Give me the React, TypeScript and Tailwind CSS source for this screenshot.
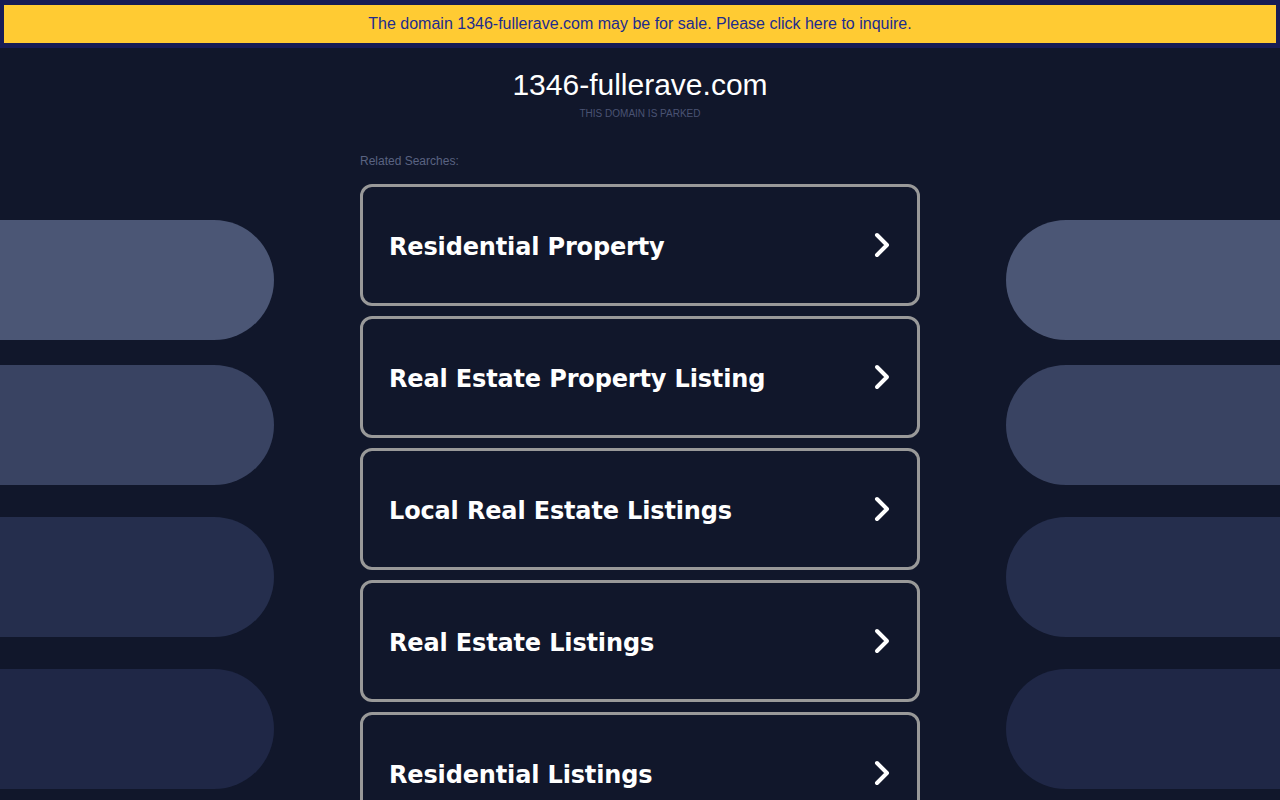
import React from "react";

const searches = [
  "Residential Property",
  "Real Estate Property Listing",
  "Local Real Estate Listings",
  "Real Estate Listings",
  "Residential Listings",
];

const pills = [
  { color: "bg-[#4b5675]", gap: "mt-[172px]" },
  { color: "bg-[#394362]", gap: "mt-[25px]" },
  { color: "bg-[#252e4d]", gap: "mt-[32px]" },
  { color: "bg-[#1f2746]", gap: "mt-[32px]" },
];

function Chevron() {
  return (
    <svg width="20" height="28" viewBox="0 0 20 28" fill="none" aria-hidden="true">
      <polyline points="5,4 15,14 5,24" stroke="#ffffff" strokeWidth="4" strokeLinecap="round" strokeLinejoin="round" />
    </svg>
  );
}

function SearchCard({ label }: { label: string }) {
  return (
    <a
      href="#"
      className="flex h-[122px] items-center justify-between rounded-[12px] border-[3px] border-[#999999] pl-[26px] pr-[25px] text-white"
    >
      <span className="pt-[4px] font-['DejaVu_Sans',sans-serif] text-[24px] font-bold tracking-[-0.15px]">{label}</span>
      <Chevron />
    </a>
  );
}

export default function App() {
  return (
    <div className="min-h-screen overflow-hidden bg-[#11172b] font-['Liberation_Sans',Arial,sans-serif]">
      <div className="border-x-4 border-y-[5px] border-[#171c55] bg-[#ffcb33]">
        <p className="flex h-[38px] items-center justify-center text-[16px] text-[#1d2c8e]">
          The domain 1346-fullerave.com may be for sale. Please click here to inquire.
        </p>
      </div>

      <div className="grid grid-cols-[360px_560px_360px]">
        <div className="flex flex-col items-end pr-[86px]">
          {pills.map((p) => (
            <div key={p.color} className={`${p.gap} h-[120px] w-[320px] rounded-r-full ${p.color}`} />
          ))}
        </div>

        <div className="flex flex-col">
          <h1 className="mt-[20px] text-center text-[30px] leading-[34px] text-white">1346-fullerave.com</h1>
          <p className="mt-[6px] text-center text-[10px] leading-[12px] text-[#4a5373]">THIS DOMAIN IS PARKED</p>
          <p className="mt-[34px] text-[12px] leading-[14px] text-[#5a6382]">Related Searches:</p>
          <div className="mt-[16px] flex flex-col gap-[10px]">
            {searches.map((s) => (
              <SearchCard key={s} label={s} />
            ))}
          </div>
        </div>

        <div className="flex flex-col pl-[86px]">
          {pills.map((p) => (
            <div key={p.color} className={`${p.gap} h-[120px] w-[320px] rounded-l-full ${p.color}`} />
          ))}
        </div>
      </div>
    </div>
  );
}
